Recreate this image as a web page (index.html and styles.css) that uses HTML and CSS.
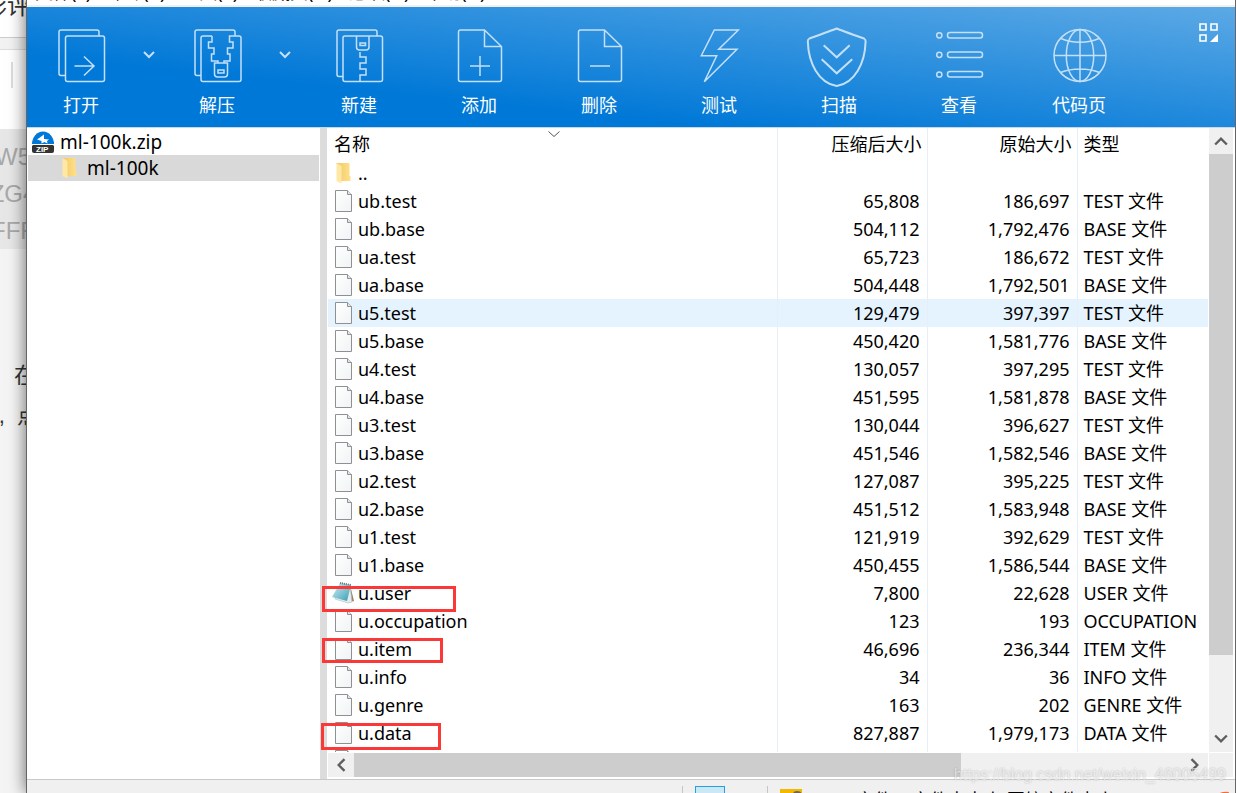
FILE: index.html
```html
<!DOCTYPE html>
<html lang="zh-CN">
<head>
<meta charset="utf-8">
<title>ml-100k.zip</title>
<link rel="stylesheet" href="styles.css">
</head>
<body>
<svg class="defs" aria-hidden="true">
  <defs>
    <linearGradient id="paper" x1="0" y1="0" x2="1" y2="1"><stop offset="0" stop-color="#fff"/><stop offset="1" stop-color="#f1f3f4"/></linearGradient>
    <linearGradient id="gold" x1="0" y1="0" x2="1" y2="0"><stop offset="0" stop-color="#f0c964"/><stop offset="1" stop-color="#ffe08a"/></linearGradient>
    <linearGradient id="teal" x1="0" y1="0" x2="1" y2="1"><stop offset="0" stop-color="#d5eef2"/><stop offset=".6" stop-color="#74bfd0"/><stop offset="1" stop-color="#3e95ad"/></linearGradient>
    <symbol id="file" viewBox="0 0 17 22"><path d="M.5.5h12l4 4v17H.5z" fill="url(#paper)" stroke="#8e9193"/><path d="M12.500.5v4h4" fill="#e4e6e7" stroke="#8e9193"/></symbol>
    <symbol id="folder" viewBox="0 0 16 22"><path d="M1 1h13v13l1 0v5H5z" fill="url(#gold)"/><path d="M1 1l5 3v17.500L1 19z" fill="#ffe8a3"/></symbol>
    <symbol id="notes" viewBox="0 0 24 24"><path d="M18 4l4 16-4 1-7-2z" fill="#99835f"/><path d="M9 2l9 2 2 17-4 1-13-4z" fill="#e5eced" stroke="#aeb9bd" stroke-width=".6"/><path d="M8 2l11 2-4 16L0 16z" fill="url(#teal)"/><path d="M8 2l11 2" stroke="#777" stroke-width="2" stroke-dasharray="1 1"/></symbol>
  </defs>
</svg>

<aside class="backdrop">
  <div class="bd-title">影评</div>
  <div class="bd-gap"></div>
  <div class="bd-bar"><i></i></div>
  <div class="bd-code"><div>W5</div><div>ZG4</div><div>FFF</div></div>
  <div class="bd-text"><div>在</div><div class="bd-next"><span>,</span><span>点</span></div></div>
</aside>

<main class="window">
  <nav class="menu"><span>文件(F)</span><span>命令(C)</span><span>工具(S)</span><span>收藏夹(O)</span><span>选项(N)</span><span>帮助(H)</span></nav>

  <header class="toolbar">
    <button class="tool narrow"><svg class="ticon" viewBox="0 0 60 60"><path d="M14 48.500h-4q-2 0-2-2V5q0-2 2-2h36q2 0 2 2v4"/><rect x="14.500" y="9" width="39" height="45.500" rx="2"/><path d="M23.500 39h20M33 29.500l10 9.500-10 9.500"/></svg>打开</button>
    <button class="more" aria-label="打开选项"><svg viewBox="0 0 12 8"><path d="M1 1l5 5 5-5"/></svg></button>
    <button class="tool narrow"><svg class="ticon" viewBox="0 0 60 60"><path d="M14 48.500h-4q-2 0-2-2V5q0-2 2-2h36q2 0 2 2v4"/><path d="M25 9H16q-2 0-2 2v41.500q0 2 2 2h36q2 0 2-2V11q0-2-2-2H42.500v6H46v6h-5.500v6H43v7h-6v2M25 9v6h-3.500v6H27v6h-2.500v7H31v2M27.500 36h13v11q0 3-3 3h-7q-3 0-3-3z"/><rect x="31" y="43" width="6" height="3"/></svg>解压</button>
    <button class="more" aria-label="解压选项"><svg viewBox="0 0 12 8"><path d="M1 1l5 5 5-5"/></svg></button>
    <button class="tool"><svg class="ticon" viewBox="0 0 60 60"><path d="M14 49.500h-4q-2 0-2-2V5q0-2 2-2h36q2 0 2 2v4"/><rect x="14" y="9" width="39.500" height="45.500" rx="2"/><path d="M27.500 9v11q0 3 3 3H37q3 0 3-3V9M31 25v5h6v6h-6v6h6v6h-6v6"/><rect x="31" y="16" width="5.500" height="2.500"/></svg>新建</button>
    <button class="tool"><svg class="ticon" viewBox="0 0 60 60"><path d="M35.500 3H11.500q-2 0-2 2v47.500q0 2 2 2h39q2 0 2-2V19.500zM35.500 3v16.500h17M21 39h20M31 29v20"/></svg>添加</button>
    <button class="tool"><svg class="ticon" viewBox="0 0 60 60"><path d="M35.500 3H11.500q-2 0-2 2v47.500q0 2 2 2h39q2 0 2-2V19.500zM35.500 3v16.500h17M21 39h20"/></svg>删除</button>
    <button class="tool"><svg class="ticon" viewBox="0 0 60 60"><path d="M25.300 3h24L29.700 22.300H48L15.300 54.700l12.400-26h-15.400z"/></svg>测试</button>
    <button class="tool"><svg class="ticon thick" viewBox="0 0 60 60"><path d="M27.700 1.500Q31 3 55 11.500q1.800 1 1.600 3C56 36 46 56 27.700 59 9.500 56-.5 36-1.200 14.500q-.2-2 1.600-3Q24 3 27.700 1.500z"/><path d="M14.700 18.300l13 12 13-12M12.700 32.300l15 14 15.500-14"/></svg>扫描</button>
    <button class="tool"><svg class="ticon" viewBox="0 0 60 60"><circle cx="10.300" cy="8.300" r="2.600"/><circle cx="10.300" cy="27.800" r="2.600"/><circle cx="10.300" cy="47.500" r="2.600"/><rect x="18.500" y="5.500" width="35" height="5.500" rx="2.500"/><rect x="18.500" y="25" width="35" height="5.500" rx="2.500"/><rect x="18.500" y="44.500" width="35" height="5.500" rx="2.500"/></svg>查看</button>
    <button class="tool"><svg class="ticon" viewBox="0 0 60 60"><circle cx="31" cy="28.500" r="26"/><ellipse cx="31" cy="28.500" rx="13.700" ry="26"/><path d="M31 2.500v52M5 28.500h52M11.500 11.300Q20 15.300 31 15.300t19.500-4M11.500 45.500Q20 42 31 42t19.500 3.500"/></svg>代码页</button>
    <button class="skin" aria-label="切换皮肤"><svg viewBox="0 0 20 20"><path d="M1 1h6v6H1zM12 1h6v6h-6zM1 12h6v6H1z" fill="none" stroke="#fff" stroke-width="1.600"/><path d="M19 11v8h-8z" fill="#fff"/></svg></button>
  </header>

  <section class="content">
    <div class="tree">
      <a class="node" href="#root"><svg class="zip" viewBox="0 0 22 22"><path d="M0 13a11 12.500 0 1 1 22 0z" fill="#0078d7"/><path d="M12 3.500L5 8.500l4.500 1.500v2.500l3-1.500 3 1.500-.5-2.500 2-1.500-5-.5z" fill="#fff"/><path d="M1 14h20l1 1v5q0 2-2 2H2q-2 0-2-2v-5z" fill="#333"/><text x="4" y="21" class="ziptext">ZIP</text></svg>ml-100k.zip</a>
      <a class="node child" href="#folder"><svg class="folder"><use href="#folder"/></svg>ml-100k</a>
    </div>
    <div class="splitter"></div>
    <div class="pane">
      <div class="list">
        <table>
          <colgroup><col><col class="c-num"><col class="c-num"><col class="c-type"></colgroup>
          <thead><tr><th>名称<svg class="sort" viewBox="0 0 12 7"><path d="M.5.5L6 5.500 11.500.5"/></svg></th><th class="num">压缩后大小</th><th class="num">原始大小</th><th>类型</th></tr></thead>
          <tbody>
            <tr><td><span class="name"><svg class="folder"><use href="#folder"/></svg>..</span></td><td class="num"></td><td class="num"></td><td></td></tr>
            <tr><td><span class="name"><svg class="file"><use href="#file"/></svg>ub.test</span></td><td class="num">65,808</td><td class="num">186,697</td><td>TEST 文件</td></tr>
            <tr><td><span class="name"><svg class="file"><use href="#file"/></svg>ub.base</span></td><td class="num">504,112</td><td class="num">1,792,476</td><td>BASE 文件</td></tr>
            <tr><td><span class="name"><svg class="file"><use href="#file"/></svg>ua.test</span></td><td class="num">65,723</td><td class="num">186,672</td><td>TEST 文件</td></tr>
            <tr><td><span class="name"><svg class="file"><use href="#file"/></svg>ua.base</span></td><td class="num">504,448</td><td class="num">1,792,501</td><td>BASE 文件</td></tr>
            <tr class="hot"><td><span class="name"><svg class="file"><use href="#file"/></svg>u5.test</span></td><td class="num">129,479</td><td class="num">397,397</td><td>TEST 文件</td></tr>
            <tr><td><span class="name"><svg class="file"><use href="#file"/></svg>u5.base</span></td><td class="num">450,420</td><td class="num">1,581,776</td><td>BASE 文件</td></tr>
            <tr><td><span class="name"><svg class="file"><use href="#file"/></svg>u4.test</span></td><td class="num">130,057</td><td class="num">397,295</td><td>TEST 文件</td></tr>
            <tr><td><span class="name"><svg class="file"><use href="#file"/></svg>u4.base</span></td><td class="num">451,595</td><td class="num">1,581,878</td><td>BASE 文件</td></tr>
            <tr><td><span class="name"><svg class="file"><use href="#file"/></svg>u3.test</span></td><td class="num">130,044</td><td class="num">396,627</td><td>TEST 文件</td></tr>
            <tr><td><span class="name"><svg class="file"><use href="#file"/></svg>u3.base</span></td><td class="num">451,546</td><td class="num">1,582,546</td><td>BASE 文件</td></tr>
            <tr><td><span class="name"><svg class="file"><use href="#file"/></svg>u2.test</span></td><td class="num">127,087</td><td class="num">395,225</td><td>TEST 文件</td></tr>
            <tr><td><span class="name"><svg class="file"><use href="#file"/></svg>u2.base</span></td><td class="num">451,512</td><td class="num">1,583,948</td><td>BASE 文件</td></tr>
            <tr><td><span class="name"><svg class="file"><use href="#file"/></svg>u1.test</span></td><td class="num">121,919</td><td class="num">392,629</td><td>TEST 文件</td></tr>
            <tr><td><span class="name"><svg class="file"><use href="#file"/></svg>u1.base</span></td><td class="num">450,455</td><td class="num">1,586,544</td><td>BASE 文件</td></tr>
            <tr><td><span class="name wide"><svg class="notes"><use href="#notes"/></svg>u.user</span></td><td class="num">7,800</td><td class="num">22,628</td><td>USER 文件</td></tr>
            <tr><td><span class="name"><svg class="file"><use href="#file"/></svg>u.occupation</span></td><td class="num">123</td><td class="num">193</td><td>OCCUPATION</td></tr>
            <tr><td><span class="name"><svg class="file"><use href="#file"/></svg>u.item</span></td><td class="num">46,696</td><td class="num">236,344</td><td>ITEM 文件</td></tr>
            <tr><td><span class="name"><svg class="file"><use href="#file"/></svg>u.info</span></td><td class="num">34</td><td class="num">36</td><td>INFO 文件</td></tr>
            <tr><td><span class="name"><svg class="file"><use href="#file"/></svg>u.genre</span></td><td class="num">163</td><td class="num">202</td><td>GENRE 文件</td></tr>
            <tr><td><span class="name"><svg class="file"><use href="#file"/></svg>u.data</span></td><td class="num">827,887</td><td class="num">1,979,173</td><td>DATA 文件</td></tr>
            <tr><td><span class="name"><svg class="file"><use href="#file"/></svg></span></td><td class="num"></td><td class="num"></td><td></td></tr>
          </tbody>
        </table>
      </div>
      <div class="vbar">
        <button aria-label="向上"><svg viewBox="0 0 12 12"><path d="M1 9l5-5 5 5"/></svg></button>
        <div class="thumb"></div><div class="track"></div>
        <button aria-label="向下"><svg viewBox="0 0 12 12"><path d="M1 3l5 5 5-5"/></svg></button>
      </div>
      <div class="hbar">
        <button aria-label="向左"><svg viewBox="0 0 12 12"><path d="M9 1L4 6l5 5"/></svg></button>
        <div class="thumb"></div><div class="track"></div>
        <button aria-label="向右"><svg viewBox="0 0 12 12"><path d="M3 1l5 5-5 5"/></svg></button>
      </div>
      <div class="corner"></div>
    </div>
    <div class="mark mark-user"></div>
    <div class="mark mark-item"></div>
    <div class="mark mark-data"></div>
  </section>

  <footer class="status">
    <i class="sep"></i><i class="view"></i><i class="sep"></i>
    <svg class="lock" viewBox="0 0 24 14"><rect width="22" height="14" fill="#f5b800"/><path d="M13 5q0-3 4-3t5 3v9h-9z" fill="#666"/></svg>
    <span class="info">文件 1 文件夹大小 压缩文件大小</span>
    <svg class="logo" viewBox="0 0 14 14"><path d="M0 4Q6 0 13 1l-3 8z" fill="#f26b3a"/></svg>
  </footer>
</main>
<div class="watermark">https://blog.csdn.net/weixin_46005499</div>
</body>
</html>
```
FILE: styles.css
```css
* { box-sizing: border-box; }
body {
  margin: 0;
  display: flex;
  height: 100vh;
  overflow: hidden;
  background: #f4f4f4;
  color: #000;
  font: 18px/28px "Noto Sans", "Noto Sans CJK SC", sans-serif;
}
.defs { position: absolute; width: 0; height: 0; }
button { padding: 0; border: 0; background: none; color: inherit; font: inherit; }

.backdrop { flex: 0 0 26px; overflow: hidden; color: #333; font-family: "Liberation Sans", "Noto Sans CJK SC", sans-serif; }
.backdrop div { white-space: nowrap; }
.bd-title { display: flex; justify-content: flex-end; height: 38px; padding-right: 0; background: #fff; border-bottom: 1px solid #ccc; font-size: 24px; line-height: 12px; margin-right: -5px; }
.bd-gap { height: 12px; background: #f2f2f2; border-bottom: 1px solid #ddd; }
.bd-bar { height: 79px; padding: 12px 0 0 11px; background: #fff; }
.bd-bar i { display: block; width: 2px; height: 26px; background: #ddd; }
.bd-code { height: 120px; padding-top: 9px; background: #e7e7e7; color: #a9a9a9; font-size: 24px; line-height: 37px; }
.bd-code div { display: flex; justify-content: center; }
.bd-text { padding-top: 107px; font-size: 22px; line-height: 40px; }
.bd-text div { display: flex; justify-content: flex-end; margin-right: -10px; }
.bd-text .bd-next { gap: 12px; margin-right: -13px; }

.window {
  flex: 1;
  min-width: 0;
  display: flex;
  flex-direction: column;
  background: #fff;
  border: solid #666;
  border-width: 0 1px;
  box-shadow: 0 0 16px rgba(0, 0, 0, .6);
  z-index: 1;
}
.menu { flex: 0 0 7px; display: flex; align-items: flex-end; gap: 16px; padding: 0 8px 2px; overflow: hidden; border-bottom: 2px solid #f0f0f0; line-height: 22px; }

.toolbar { flex: 0 0 120px; display: flex; align-items: flex-start; padding-top: 20px; background: linear-gradient(6deg, #0078d7 29%, #5ca9e5); color: #fff; }
.tool { flex: 0 0 120px; display: flex; flex-direction: column; align-items: center; gap: 6px; line-height: 24px; }
.tool.narrow { flex-basis: 108px; }
.ticon { width: 60px; height: 60px; overflow: visible; fill: none; stroke: #c4e0f7; stroke-width: 1.5; }
.ticon.thick { stroke-width: 2; }
.more { flex: 0 0 28px; display: flex; justify-content: center; padding-top: 24px; }
.more svg { width: 12px; height: 8px; fill: none; stroke: #c4e0f7; stroke-width: 2; }
.skin { display: flex; margin: -4px 16px 0 auto; }
.skin svg { width: 20px; height: 20px; }

.content { flex: 1; min-height: 0; display: flex; position: relative; border-top: 1px solid #c9d8e6; }
.tree { flex: 0 0 293px; padding: 1px; font-size: 19px; }
.node { display: flex; align-items: center; gap: 6px; height: 26px; padding-left: 4px; color: inherit; text-decoration: none; }
.node.child { gap: 9px; padding-left: 33px; background: #d9d9d9; }
.zip { width: 22px; height: 22px; }
.ziptext { fill: #fff; font: bold 8px "Liberation Sans", sans-serif; }
.folder { width: 17px; height: 22px; }
.splitter { flex: 0 0 7px; background: #dcdcdc; }

.pane { flex: 1; min-width: 0; display: grid; grid-template-columns: 1fr 24px; grid-template-rows: 1fr 24px; gap: 1px; padding: 0 2px 2px 1px; }
.list { overflow: hidden; }
table { width: 100%; table-layout: fixed; border-collapse: collapse; }
.c-num { width: 150px; }
.c-type { width: 131px; }
th { position: relative; height: 31px; padding: 1px 6px; text-align: left; font-weight: normal; }
td { height: 28px; padding: 0 6px; white-space: nowrap; overflow: hidden; }
td + td, th + th { border-left: 1px solid #e6eef7; }
.num { text-align: right; }
th.num { padding-right: 5px; }
td.num { padding-right: 7px; }
td:first-child { padding-left: 7px; }
.name { display: flex; align-items: center; gap: 6px; height: 28px; }
.file { width: 17px; height: 22px; }
.name.wide { gap: 0; margin-left: -3px; }
.notes { width: 24px; height: 24px; margin-right: 2px; }
.hot { background: #e5f3ff; }
.sort { position: absolute; left: 49%; top: 3px; width: 12px; height: 7px; fill: none; stroke: #555; }

.vbar, .hbar { display: flex; background: #f0f0f0; }
.vbar { flex-direction: column; }
.vbar button, .hbar button { flex: 0 0 26px; display: flex; align-items: center; justify-content: center; }
.vbar svg, .hbar svg { width: 14px; height: 14px; fill: none; stroke: #5e5e5e; stroke-width: 2; }
.thumb { background: #cdcdcd; }
.vbar .thumb { flex: 501; }
.vbar .track { flex: 71; }
.hbar .thumb { flex: 607; }
.hbar .track { flex: 221; }
.corner { background: #f0f0f0; }

.mark { position: absolute; border: 3px solid #fb3838; }
.mark-user { left: 295px; top: 458px; width: 134px; height: 26px; }
.mark-item { left: 295px; top: 510px; width: 121px; height: 25px; }
.mark-data { left: 294px; top: 595px; width: 120px; height: 27px; }

.status { flex: 0 0 14px; display: flex; justify-content: flex-end; overflow: hidden; padding: 6px 5px 0 0; border-top: 1px solid #c9c9c9; background: #f0f0f0; }
.sep { width: 1px; height: 24px; margin-right: 12px; background: #c6c6c6; }
.view { width: 30px; height: 28px; margin-right: 42px; border: 1px solid #26a0da; background: #cbe8f6; }
.lock { width: 24px; height: 14px; margin-top: 3px; }
.info { width: 360px; margin-left: 52px; white-space: nowrap; line-height: 28px; }
.logo { width: 14px; height: 14px; margin-top: 5px; }

.watermark { position: absolute; right: 10px; bottom: 8px; z-index: 2; color: rgba(255, 255, 255, .6); font: 16px/20px "Liberation Sans", sans-serif; text-shadow: 0 0 2px rgba(0, 0, 0, .25); }
```
